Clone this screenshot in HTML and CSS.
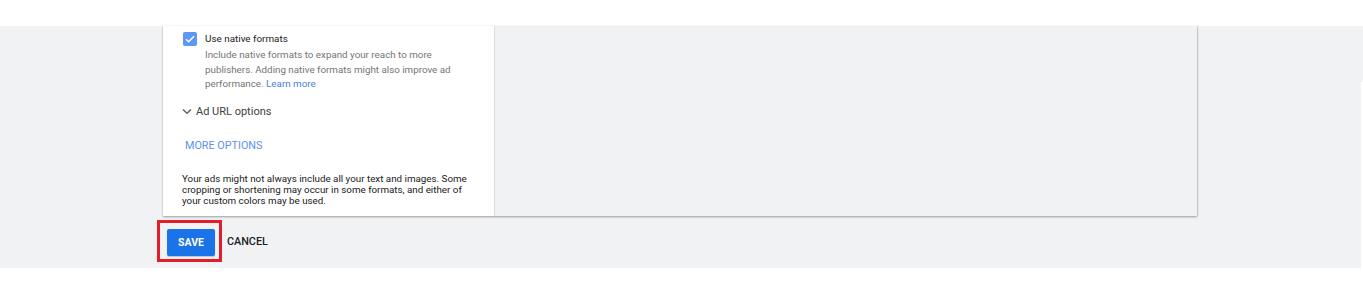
FILE: index.html
```html
<!DOCTYPE html>
<html lang="en">
<head>
  <meta charset="UTF-8">
  <meta name="viewport" content="width=device-width, initial-scale=1.0">
  <title>Ad settings</title>
  <link rel="stylesheet" href="styles.css">
</head>
<body>
  <div class="top-bar"></div>
  <div class="page">
    <div class="card">
      <div class="card-left">
        <div class="native-row">
          <span class="checkbox">
            <svg width="10" height="8" viewBox="0 0 10 8"><path d="M1 4.2 L3.7 6.8 L9 1.3" fill="none" stroke="#fff" stroke-width="1.5"/></svg>
          </span>
          <div class="native-text">
            <div class="native-title">Use native formats</div>
            <div class="native-desc">Include native formats to expand your reach to more publishers. Adding native formats might also improve ad performance. <a href="#" class="link">Learn more</a></div>
          </div>
        </div>

        <div class="url-options">
          <svg class="chevron" width="10" height="7" viewBox="0 0 10 7"><path d="M1 1.5 L5 5.3 L9 1.5" fill="none" stroke="#5f6368" stroke-width="1.5"/></svg>
          Ad URL options
        </div>

        <div class="more-options">MORE OPTIONS</div>

        <p class="note">Your ads might not always include all your text and images. Some cropping or shortening may occur in some formats, and either of your custom colors may be used.</p>
      </div>
      <div class="card-right"></div>
    </div>

    <div class="actions">
      <span class="highlight">
        <button class="save-btn">SAVE</button>
      </span>
      <button class="cancel-btn">CANCEL</button>
    </div>
    <div class="scroll-edge"></div>
  </div>
</body>
</html>
```

FILE: styles.css
```css
body {
  margin: 0;
  background: #fff;
  font-family: Roboto, "Liberation Sans", Arial, sans-serif;
}

.top-bar {
  height: 26px;
}

.page {
  position: relative;
  background: #f1f2f4;
  height: 242px;
  padding-left: 163px;
}

.card {
  display: flex;
  width: 1034px;
  height: 190px;
  background: #fff;
  box-shadow: 0 1px 2px rgba(0, 0, 0, 0.35), 1px 0 1px rgba(0, 0, 0, 0.08);
}

.card-left {
  width: 331px;
  padding-left: 19px;
  box-sizing: border-box;
}

.card-right {
  flex: 1;
  background: #f1f2f4;
  border-left: 1px solid #dadce0;
}

.native-row {
  display: flex;
  padding-top: 5px;
}

.checkbox {
  display: flex;
  align-items: center;
  justify-content: center;
  width: 14px;
  height: 14px;
  margin-left: 1px;
  margin-top: 1px;
  border-radius: 2px;
  background: #5e97f6;
}

.native-text {
  margin-left: 8px;
  width: 270px;
}

.native-title {
  font-size: 9.9px;
  color: #212121;
  line-height: 15px;
}

.native-desc {
  font-size: 9.8px;
  color: #757575;
  line-height: 14.5px;
  margin-top: 2px;
}

.link {
  color: #4a7fd8;
  text-decoration: none;
}

.url-options {
  display: flex;
  align-items: center;
  margin-top: 13px;
  font-size: 11px;
  color: #3c4043;
}

.chevron {
  margin-right: 4px;
}

.more-options {
  margin-top: 21px;
  margin-left: 3px;
  font-size: 10.8px;
  color: #5e8ff0;
}

.note {
  margin: 21px 0 0;
  width: 290px;
  font-size: 9.8px;
  line-height: 11px;
  color: #212121;
}

.actions {
  display: flex;
  align-items: center;
  margin-top: 4px;
  margin-left: -6px;
}

.highlight {
  display: inline-block;
  padding: 6px 4px 3px 7px;
  border: 3px solid #e51c2a;
}

.save-btn {
  display: block;
  width: 48px;
  height: 27px;
  border: none;
  border-radius: 2px;
  background: #1a73e8;
  color: #fff;
  font-family: inherit;
  font-size: 10.5px;
  font-weight: 700;
  box-shadow: 0 1px 1px rgba(0, 0, 0, 0.2);
}

.cancel-btn {
  margin-left: 5px;
  padding: 0;
  border: none;
  background: none;
  font-family: inherit;
  font-size: 10.8px;
  font-weight: 500;
  color: #202124;
}

.scroll-edge {
  position: absolute;
  right: 0;
  top: 56px;
  bottom: 0;
  width: 2px;
  background: #fff;
}
```
